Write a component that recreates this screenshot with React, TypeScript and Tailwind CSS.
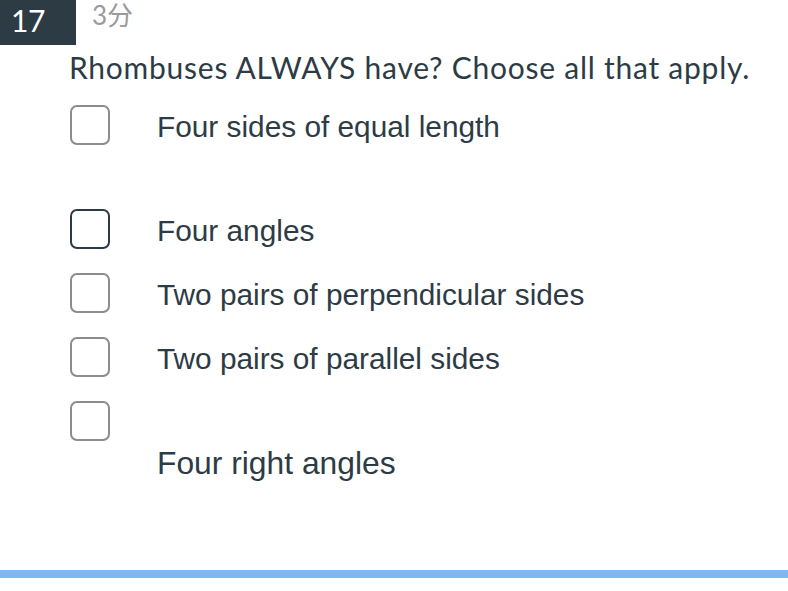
import React from "react";

const opts: { label: string; extra?: boolean; below?: boolean; dark?: boolean }[] = [
  { label: "Four sides of equal length", extra: true },
  { label: "Four angles", dark: true },
  { label: "Two pairs of perpendicular sides" },
  { label: "Two pairs of parallel sides" },
  { label: "Four right angles", below: true },
];

function Box({ dark }: { dark?: boolean }) {
  return (
    <div
      className={
        "w-[40px] h-[40px] shrink-0 rounded-[7px] border-2 bg-white " +
        (dark ? "border-[#2d3b45]" : "border-[#8c8c8c]")
      }
    />
  );
}

export default function App() {
  return (
    <div className="w-[788px] h-[591px] bg-white overflow-hidden text-[#2d3b45]">
      <div className="flex h-[45px] items-center">
        <div
          className="w-[76px] h-[45px] bg-[#2d3b45] text-white text-[30px] leading-[45px] pl-[11px] -tracking-[0.5px]"
          style={{ fontFamily: "Lato, 'Noto Sans', sans-serif" }}
        >
          <span className="relative -top-[2px]">17</span>
        </div>
        <div
          className="ml-[16px] text-[26px] leading-[45px] text-[#9a9a9a] -mt-[14px]"
          style={{ fontFamily: "Lato, 'Noto Sans CJK SC', sans-serif" }}
        >
          3分
        </div>
      </div>
      <div
        className="mt-[5px] pl-[69px] text-[30px] leading-[35px] tracking-[0.75px]"
        style={{ fontFamily: "Lato, 'Noto Sans', sans-serif" }}
      >
        Rhombuses ALWAYS have? Choose all that apply.
      </div>
      <div
        className="mt-[20px] pl-[70px] flex flex-col gap-[24px] text-[29.8px] leading-[40px]"
        style={{ fontFamily: "'Liberation Sans', Arial, sans-serif" }}
      >
        {opts.map((o, i) =>
          o.below ? (
            <div key={i} className="flex flex-col">
              <Box dark={o.dark} />
              <div className="pl-[87px] pt-[2px] h-[40px] text-[31.8px]">{o.label}</div>
            </div>
          ) : (
            <div key={i} className="flex items-start">
              <Box dark={o.dark} />
              <div className={"pl-[47px] pt-[2px] " + (o.extra ? "h-[80px]" : "h-[40px]")}>
                {o.label}
              </div>
            </div>
          )
        )}
      </div>
      <div className="mt-[89px] h-[8px] bg-[#7ab8f6]" />
    </div>
  );
}
